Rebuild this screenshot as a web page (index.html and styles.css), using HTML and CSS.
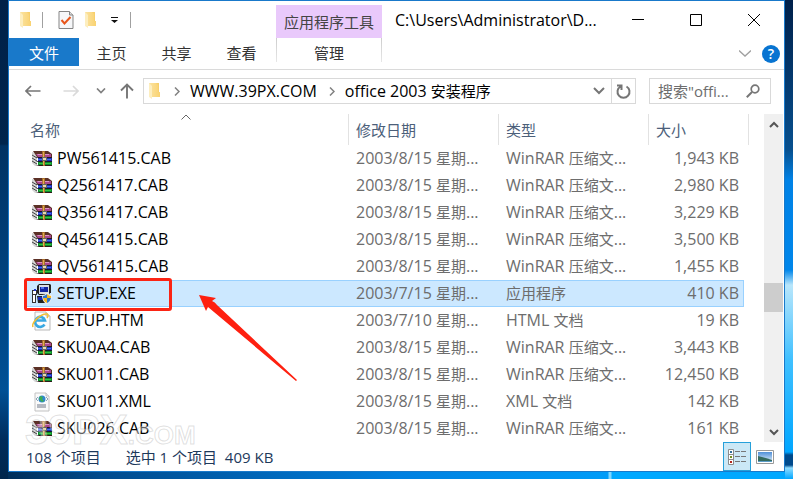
FILE: index.html
```html
<!DOCTYPE html>
<html lang="zh-CN">
<head>
<meta charset="utf-8">
<title>office 2003 安装程序</title>
<link rel="stylesheet" href="styles.css">
</head>
<body>
<svg class="defs" aria-hidden="true">
  <defs>
    <linearGradient id="gold" x1="0" x2="1"><stop offset="0" stop-color="#fbe3a0"/><stop offset="1" stop-color="#f9d271"/></linearGradient>
    <linearGradient id="sky" x1="0" y1="0" x2="0" y2="1"><stop offset="0" stop-color="#4f8fd8"/><stop offset="1" stop-color="#e4f1fb"/></linearGradient>
    <symbol id="folder" viewBox="0 0 14 18">
      <path d="M5 1h6v9h1v5H5z" fill="#f7cf6c"/><path d="M1 1h7l2 2v7h2v5H1z" fill="url(#gold)"/><path d="M1 1l3 3v13l-3-2z" fill="#fdeebf"/>
    </symbol>
    <symbol id="rar" viewBox="0 0 20 16">
      <path d="M0 1l5 1v13H3L0 12z" fill="#d5d5d5"/><path d="M0 4l5 3M0 7l5 3M0 10l5 3" stroke="#444" stroke-width="1"/>
      <path d="M1 0h15l4 3v3H5z" fill="#5b3026"/>
      <path d="M4 3h15v3H6z" fill="#a8468c"/><path d="M5 3h12v1H6z" fill="#dc93c4"/>
      <path d="M4 6h16v1H6z" fill="#271a1a"/><path d="M6 7h14v3H6z" fill="#1c2cb4"/><path d="M6 8h13v1H6z" fill="#4070ee"/>
      <path d="M4 10h16v1H6z" fill="#18182a"/><path d="M6 11h14v3H6z" fill="#0b8a2a"/><path d="M7 12h12v1H7z" fill="#35c43c"/><path d="M4 14h16v1H7z" fill="#2c1c18"/>
      <path d="M10 0h3v15h-2z" fill="#a8702b"/><path d="M11.500 1v13" stroke="#e2ad4d"/><path d="M10 6h5v4h-5z" fill="#666"/><path d="M11 7h3v2h-3z" fill="#e8d9ad"/>
    </symbol>
    <symbol id="setup" viewBox="0 0 20 20">
      <path d="M7 0h11l1 1v8h-1l-1 2H7L5 9V2z" fill="#222"/><path d="M7 1h10v9H7z" fill="#d8dce2"/><path d="M8 3h8v5H8z" fill="#1225a0"/><path d="M9 3h3v2H9z" fill="#4f6ff0"/>
      <path d="M5 12h12v7H6z" fill="#222"/><path d="M6 13h9v3H6z" fill="#1b2cb4"/>
      <path d="M0 6h5v5H4v8H0z" fill="#333"/><path d="M1 7h3v3H1zM1 11h2v7H1z" fill="#fff"/>
      <path d="M2 5h2v2H2z" fill="#2338d0"/>
      <path d="M15 9q2 2 5 2 0 7-5 9-5-2-5-9 3 0 5-2z" fill="#f0f0f0"/>
      <path d="M15 10v4h-4q0-1 0-2 2 0 4-2zM15 14h4q-1 4-4 5z" fill="#2b76cf"/><path d="M15 10q2 2 4 2v2h-4zM11 14h4v5q-3-1-4-5z" fill="#f6b51e"/>
    </symbol>
    <symbol id="htm" viewBox="0 0 20 20">
      <path d="M3 1h11l4 4v14H3z" fill="#fcfcfc" stroke="#b9b9b9"/><path d="M14 1v4h4" fill="#eee" stroke="#b9b9b9"/>
      <path d="M12.500 13.500A5 5 0 1 1 13 9.500H4" fill="none" stroke="#39a8e2" stroke-width="2.600"/>
      <path d="M1 16C-1 12 9 2 15 3q2 1 0 4" fill="none" stroke="#f3bf35" stroke-width="1.500"/>
    </symbol>
    <symbol id="xml" viewBox="0 0 20 20">
      <path d="M3 1h11l3 3v15H3z" fill="#fafafa" stroke="#c2c2c2"/><path d="M14 1v3h3" fill="#eee" stroke="#c2c2c2"/>
      <circle cx="10" cy="7" r="3.500" fill="#2d86cd"/><path d="M8 4l3 1-1 2 2 2-2 1-3-3z" fill="#3fae50"/>
      <path d="M6 5L4 7l2 2M14 5l2 2-2 2" fill="none" stroke="#8aa5b7"/><path d="M5 12h9v4H5z" fill="#b5b9c1"/>
    </symbol>
  </defs>
</svg>

<main class="window">
  <header class="ribbon">
    <div class="quick">
      <svg class="folder"><use href="#folder"/></svg>
      <span class="bar"></span>
      <button class="plain props" aria-label="属性"><svg width="16" height="18" viewBox="0 0 16 18"><path d="M1 .5h10.500L15 4v13.500H1z" fill="#f6f7f9" stroke="#858585"/><path d="M11.500.5V4H15" fill="#ddd" stroke="#858585"/><path d="M3.500 9l3 3.500L12.500 6" fill="none" stroke="#e8561c" stroke-width="2"/></svg></button>
      <button class="plain" aria-label="新建文件夹"><svg class="folder"><use href="#folder"/></svg></button>
      <button class="plain more" aria-label="自定义"><svg width="7" height="6" viewBox="0 0 7 6"><path d="M0 0h7v1H0zM0 3h7L3.500 6z" fill="#111"/></svg></button>
      <span class="bar"></span>
    </div>
    <div class="context">应用程序工具</div>
    <div class="caption">
      <h1 class="title">C:\Users\Administrator\D...</h1>
      <div class="controls">
        <button class="plain" aria-label="最小化"><svg width="12" height="12" viewBox="0 0 12 12"><path d="M0 5.500h12" stroke="#000"/></svg></button>
        <button class="plain" aria-label="最大化"><svg width="12" height="12" viewBox="0 0 12 12"><path d="M.5.500h11v11H.5z" fill="none" stroke="#000"/></svg></button>
        <button class="plain" aria-label="关闭"><svg width="12" height="12" viewBox="0 0 12 12"><path d="M0 0l12 12M12 0L0 12" stroke="#000"/></svg></button>
      </div>
    </div>
    <nav class="tabs">
      <button class="plain tab file">文件</button>
      <button class="plain tab">主页</button>
      <button class="plain tab">共享</button>
      <button class="plain tab">查看</button>
    </nav>
    <button class="plain tab manage">管理</button>
    <div class="help">
      <button class="plain" aria-label="展开功能区"><svg width="12" height="7" viewBox="0 0 12 7"><path d="M0 .5L6 6 12 .5" fill="none" stroke="#a0a0a0" stroke-width="1.300"/></svg></button>
      <button class="plain question" aria-label="帮助">?</button>
    </div>
  </header>

  <div class="navbar">
    <div class="arrows">
      <button class="plain" aria-label="后退"><svg width="16" height="12" viewBox="0 0 16 12"><path d="M15.500 6H1.500M6 1L1 6l5 5" fill="none" stroke="#767676" stroke-width="1.700"/></svg></button>
      <button class="plain forward" aria-label="前进"><svg width="16" height="12" viewBox="0 0 16 12"><path d="M.5 6h14M10 1l5 5-5 5" fill="none" stroke="#dadada" stroke-width="1.700"/></svg></button>
      <button class="plain recent" aria-label="最近位置"><svg width="10" height="6" viewBox="0 0 10 6"><path d="M1 .5l4 4 4-4" fill="none" stroke="#808080" stroke-width="1.700"/></svg></button>
      <button class="plain up" aria-label="上移"><svg width="14" height="16" viewBox="0 0 14 16"><path d="M7 15.500V2M1 7.500l6-6 6 6" fill="none" stroke="#767676" stroke-width="1.900"/></svg></button>
    </div>
    <div class="address">
      <svg class="folder"><use href="#folder"/></svg>
      <svg class="crumb" viewBox="0 0 6 9"><path d="M1 .5l4 4-4 4" fill="none" stroke="#808080" stroke-width="1.500"/></svg>
      <a class="path" href="#site">WWW.39PX.COM</a>
      <svg class="crumb" viewBox="0 0 6 9"><path d="M1 .5l4 4-4 4" fill="none" stroke="#808080" stroke-width="1.500"/></svg>
      <a class="path" href="#office">office 2003 <span class="han">安装程序</span></a>
      <button class="plain history" aria-label="以前的位置"><svg width="12" height="8" viewBox="0 0 12 8"><path d="M1 1l5 5 5-5" fill="none" stroke="#767676" stroke-width="2"/></svg></button>
      <button class="plain refresh" aria-label="刷新"><svg width="15" height="15" viewBox="0 0 15 15"><path d="M10.500 2.500a6 6 0 1 1-6 0M1 1.500h4.500v4.500" fill="none" stroke="#767676" stroke-width="2"/></svg></button>
    </div>
    <label class="search">
      <input type="text" placeholder="搜索&quot;offi..." aria-label="搜索">
      <svg width="14" height="14" viewBox="0 0 14 14"><circle cx="9" cy="5" r="3.800" fill="none" stroke="#767676" stroke-width="1.700"/><path d="M6 8L.8 13.200" stroke="#767676" stroke-width="2"/></svg>
    </label>
  </div>

  <section class="content">
    <div class="list">
      <table class="files">
        <colgroup><col><col class="c-mid"><col class="c-mid"><col class="c-size"></colgroup>
        <thead>
          <tr><th>名称<svg class="sort" width="10" height="6" viewBox="0 0 10 6"><path d="M.5 5.500L5 1l4.500 4.500" fill="none" stroke="#666"/></svg></th><th>修改日期</th><th>类型</th><th>大小</th></tr>
        </thead>
        <tbody>
          <tr><td><svg class="icon"><use href="#rar"/></svg>PW561415.CAB</td><td>2003/8/15 <span class="han">星期</span>...</td><td>WinRAR <span class="han">压缩文</span>...</td><td>1,943 KB</td></tr>
          <tr><td><svg class="icon"><use href="#rar"/></svg>Q2561417.CAB</td><td>2003/8/15 <span class="han">星期</span>...</td><td>WinRAR <span class="han">压缩文</span>...</td><td>2,980 KB</td></tr>
          <tr><td><svg class="icon"><use href="#rar"/></svg>Q3561417.CAB</td><td>2003/8/15 <span class="han">星期</span>...</td><td>WinRAR <span class="han">压缩文</span>...</td><td>3,229 KB</td></tr>
          <tr><td><svg class="icon"><use href="#rar"/></svg>Q4561415.CAB</td><td>2003/8/15 <span class="han">星期</span>...</td><td>WinRAR <span class="han">压缩文</span>...</td><td>3,500 KB</td></tr>
          <tr><td><svg class="icon"><use href="#rar"/></svg>QV561415.CAB</td><td>2003/8/15 <span class="han">星期</span>...</td><td>WinRAR <span class="han">压缩文</span>...</td><td>1,455 KB</td></tr>
          <tr class="selected"><td><svg class="icon tall"><use href="#setup"/></svg>SETUP.EXE
            <span class="callout"></span>
            <svg class="pointer" width="99" height="88" viewBox="0 0 99 88"><path d="M0 0l17 3-4 3q3 1 5 4L98 85l-1 1L9 12l-2 4z" fill="#fe2010"/></svg></td><td>2003/7/15 <span class="han">星期</span>...</td><td><span class="han">应用程序</span></td><td>410 KB</td></tr>
          <tr><td><svg class="icon tall"><use href="#htm"/></svg>SETUP.HTM</td><td>2003/7/10 <span class="han">星期</span>...</td><td>HTML <span class="han">文档</span></td><td>19 KB</td></tr>
          <tr><td><svg class="icon"><use href="#rar"/></svg>SKU0A4.CAB</td><td>2003/8/15 <span class="han">星期</span>...</td><td>WinRAR <span class="han">压缩文</span>...</td><td>3,443 KB</td></tr>
          <tr><td><svg class="icon"><use href="#rar"/></svg>SKU011.CAB</td><td>2003/8/15 <span class="han">星期</span>...</td><td>WinRAR <span class="han">压缩文</span>...</td><td>12,450 KB</td></tr>
          <tr><td><svg class="icon tall"><use href="#xml"/></svg>SKU011.XML</td><td>2003/8/15 <span class="han">星期</span>...</td><td>XML <span class="han">文档</span></td><td>142 KB</td></tr>
          <tr><td><svg class="icon"><use href="#rar"/></svg>SKU026.CAB</td><td>2003/8/15 <span class="han">星期</span>...</td><td>WinRAR <span class="han">压缩文</span>...</td><td>161 KB</td></tr>
        </tbody>
      </table>
    </div>
    <div class="scroll">
      <button class="plain" aria-label="向上滚动"><svg width="10" height="7" viewBox="0 0 10 7"><path d="M1 6l4-4 4 4" fill="none" stroke="#555" stroke-width="2"/></svg></button>
      <div class="track"><div class="thumb"></div></div>
      <button class="plain" aria-label="向下滚动"><svg width="10" height="7" viewBox="0 0 10 7"><path d="M1 1l4 4 4-4" fill="none" stroke="#555" stroke-width="2"/></svg></button>
    </div>
  </section>

  <footer class="status">
    <span class="count">108 <span class="han">个项目</span></span>
    <span class="chosen"><span class="han">选中</span> 1 <span class="han">个项目</span>&nbsp; 409 KB</span>
    <div class="views">
      <button class="plain view on" aria-label="详细信息"><svg width="18" height="16" viewBox="0 0 18 16"><path d="M.5.500h5v15h-5zM.5 5.500h5M.5 10.500h5" fill="#fff" stroke="#8c8c8c"/><path d="M2 2h2v2H2z" fill="#2f6e99"/><path d="M2 7h2v2H2z" fill="#6e8f22"/><path d="M2 12h2v2H2z" fill="#b3261c"/><path d="M7 2.500h5M13 2.500h5M7 7.500h5M13 7.500h5M7 12.500h5M13 12.500h5" stroke="#777"/></svg></button>
      <button class="plain view" aria-label="大缩略图"><svg width="18" height="14" viewBox="0 0 18 14"><path d="M.5.500h17v13H.5z" fill="#fff" stroke="#999"/><path d="M2 2h14v10H2z" fill="url(#sky)"/><path d="M2 6q5 1 14 4v1H2z" fill="#356b5f"/><path d="M2 11h14v1H2z" fill="#5c9dc8"/></svg></button>
    </div>
    <span class="watermark" aria-hidden="true">39PX<small>.COM</small></span>
  </footer>
</main>
</body>
</html>
```
FILE: styles.css
```css
* { box-sizing: border-box; }

body {
  margin: 0;
  min-height: 100vh;
  overflow: hidden;
  font: 16px/20px "Open Sans", "Noto Sans CJK SC", sans-serif;
  color: #000;
  background:
    linear-gradient(#002148, #00254d 144px, #003263 146px, #005095 390px, #002c5c 440px, #00264c) left / 8px 100% no-repeat,
    linear-gradient(#00204a, #07508f 150px, #0082e6 180px, #0086ea 270px, #b9e6fb 285px, #3fc0ff 360px, #00a6ff 452px, #004a8c 455px, #004a8c 465px, #8fdcff 468px, #00a6ff) right / 8px 100% no-repeat,
    linear-gradient(90deg, #002c55, #004a8c 100px, #0066b8 260px, #0080e0 400px, #009cf8 608px, #7fd6ff 609px, #7fd6ff 611px, #00a8ff 612px);
}

.defs { position: absolute; width: 0; height: 0; }
svg { display: block; flex: none; }
.han { font-size: 15px; }

.plain {
  display: flex;
  align-items: center;
  justify-content: center;
  padding: 0;
  border: 0;
  background: none;
  font: inherit;
  color: inherit;
}

.folder { width: 14px; height: 18px; }

.window {
  margin: 0 8px;
  border: 1px solid #1979ca;
  background: #fff;
}

.ribbon {
  display: grid;
  grid-template-columns: 267px 106px 1fr;
  grid-template-rows: 37px 31px;
  border-bottom: 1px solid #dadada;
  font-size: 15px;
}

.quick { display: flex; align-items: center; padding-left: 10px; }
.bar { width: 1px; height: 16px; margin-left: 9px; background: #a0a0a0; }
.props { margin: 0 10px 0 15px; }
.more { margin: 0 3px 0 13px; }

.context {
  margin-top: 4px;
  display: flex;
  align-items: center;
  justify-content: center;
  background: #e9c9fb;
  color: #444;
}

.caption { display: flex; align-items: center; justify-content: space-between; padding-left: 13px; }
.title { margin: 0; font-size: 16px; font-weight: 400; white-space: nowrap; }
.controls { display: flex; gap: 46px; padding-right: 24px; }

.tabs { display: flex; }
.tab { width: 65px; height: 28px; padding-top: 2px; color: #333; }
.file { width: 70px; background: #1979ca; color: #fff; }
.manage {
  width: auto;
  height: 24px;
  padding-top: 6px;
  border: solid;
  border-width: 0 1px;
  border-image: linear-gradient(#ccc, #e8e8e8) 1;
}

.help { display: flex; align-items: center; justify-content: flex-end; gap: 11px; padding-right: 4px; }
.question { width: 18px; height: 18px; border-radius: 50%; background: #0874d1; color: #fff; font-size: 14px; font-weight: 600; }

.navbar { display: flex; align-items: center; padding: 8px 13px 10px 16px; }
.arrows { display: flex; align-items: center; width: 118px; }
.forward { margin-left: 22px; }
.recent { margin-left: 17px; }
.up { margin-left: 14px; }

.address { display: flex; flex: 1; align-items: center; height: 26px; padding-left: 4px; border: 1px solid #d9d9d9; }
.crumb { width: 6px; height: 9px; margin: 0 10px 0 12px; }
.path { color: #000; text-decoration: none; white-space: nowrap; }
.history { margin-left: auto; width: 24px; height: 24px; }
.refresh { width: 24px; height: 24px; border-left: 1px solid #d9d9d9; }

.search { display: flex; align-items: center; width: 122px; height: 26px; margin-left: 13px; padding: 0 10px 0 8px; border: 1px solid #d9d9d9; }
.search input { flex: 1; min-width: 0; padding: 0; border: 0; outline: 0; background: none; font: inherit; font-size: 15px; }
.search input::placeholder { color: #6d6d6d; opacity: 1; }

.content { display: flex; }
.list { flex: 1; padding: 0 20px 0 15px; }

.files { width: 100%; table-layout: fixed; border-collapse: separate; border-spacing: 0; }
.c-mid { width: 150px; }
.c-size { width: 96px; }
.files th {
  position: relative;
  height: 31px;
  padding: 1px 0 0 7px;
  font-size: 15px;
  font-weight: 400;
  text-align: left;
  color: #4c607a;
}
.files th:first-child { padding-left: 6px; }
.files th + th { border-left: 1px solid #e2e2e2; }
.files th:last-child::after { content: ""; position: absolute; top: 0; right: -5px; width: 1px; height: 100%; background: #e2e2e2; }
.sort { position: absolute; top: 0; left: 50%; margin-left: -5px; }
.files td { position: relative; height: 27px; padding: 0 0 2px 8px; color: #6d6d6d; white-space: nowrap; }
.files td:first-child { color: #000; }
.files td:last-child { padding: 0 5px 2px 0; text-align: right; }
.selected td { background: #cce8ff; box-shadow: inset 0 1px #99d1ff, inset 0 -1px #99d1ff; }
.files .selected td:last-child { border-right: 1px solid #99d1ff; padding-right: 4px; }

.icon { display: inline-block; width: 20px; height: 16px; margin-right: 5px; vertical-align: middle; }
.tall { height: 20px; margin-top: -2px; margin-bottom: -2px; }

.callout { position: absolute; z-index: 1; top: -2px; left: 0; width: 148px; height: 33px; border: 3px solid #fb2414; border-radius: 3px; }
.pointer { position: absolute; z-index: 1; top: 15px; left: 175px; }

.scroll { display: flex; flex-direction: column; width: 19px; margin-right: 1px; background: #f0f0f0; }
.scroll .plain { height: 20px; }
.track { flex: 1; display: grid; grid-template-rows: 149fr 29fr 110fr; }
.thumb { grid-row: 2; background: #cdcdcd; }

.status { position: relative; display: flex; align-items: center; height: 29px; padding: 0 5px 0 17px; color: #1e395b; font-size: 15px; white-space: nowrap; }
.count { margin-right: 25px; }
.views { display: flex; align-self: stretch; margin-left: auto; }
.view { width: 28px; }
.on { border: 1px solid #26a0da; background: #cbe8f6; }

.watermark {
  position: absolute;
  left: 16px;
  bottom: 20px;
  font: bold 42px/32px "Liberation Sans", sans-serif;
  color: rgba(255, 255, 255, .4);
  -webkit-text-stroke: 1px rgba(150, 150, 150, .3);
  pointer-events: none;
}
.watermark small { font-size: 26px; }
```
